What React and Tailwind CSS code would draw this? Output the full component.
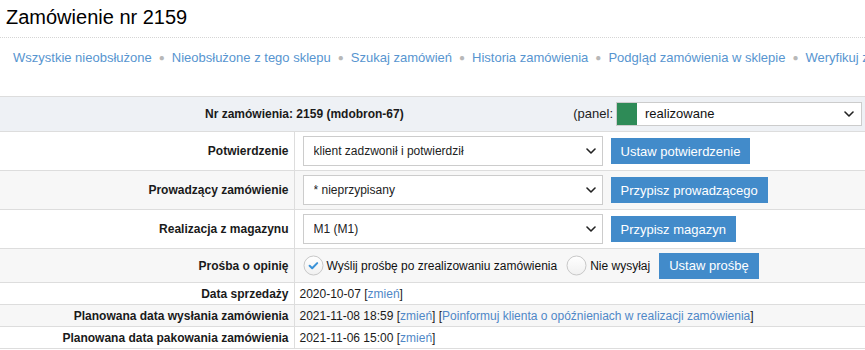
import React from 'react';

const navLinks = [
  'Wszystkie nieobsłużone',
  'Nieobsłużone z tego sklepu',
  'Szukaj zamówień',
  'Historia zamówienia',
  'Podgląd zamówienia w sklepie',
  'Weryfikuj zamówienie',
];

// strzałka selecta
const Chevron = () => (
  <svg width="10" height="6" viewBox="0 0 10 6" className="pointer-events-none absolute right-[7px] top-1/2 -translate-y-1/2">
    <path d="M1 1l4 4 4-4" fill="none" stroke="#222" strokeWidth="1.6" strokeLinecap="round" strokeLinejoin="round" />
  </svg>
);

const Select = ({ value }) => (
  <div className="relative ml-[3px] w-[300px] h-[30px]">
    <select
      defaultValue={value}
      className="appearance-none w-full h-full border border-[#ccc] bg-white pl-[10px] pr-6 text-[12px] text-[#222] outline-none"
    >
      <option>{value}</option>
    </select>
    <Chevron />
  </div>
);

const Button = ({ children }) => (
  <button className="h-[26px] px-[10px] bg-[#428bca] text-white text-[13px] leading-none whitespace-nowrap">
    {children}
  </button>
);

const Radio = ({ checked }) => (
  <svg width="21" height="21" viewBox="0 0 21 21" className="shrink-0">
    <defs>
      <linearGradient id="rg" x1="0" y1="0" x2="0" y2="1">
        <stop offset="0" stopColor="#ffffff" />
        <stop offset="1" stopColor="#f0f0f0" />
      </linearGradient>
    </defs>
    <circle cx="10.5" cy="10.5" r="9.5" fill="url(#rg)" stroke="#c8c8c8" />
    {checked && (
      <path d="M6.6 10.8l2.6 2.5 5-5.2" fill="none" stroke="#3a92d8" strokeWidth="2" strokeLinecap="round" strokeLinejoin="round" />
    )}
  </svg>
);

const Link = ({ children }) => (
  <span>
    [<a className="text-[#4f87c7]">{children}</a>]
  </span>
);

const labelCls = 'w-[294px] text-right font-bold pr-[5px] border-r border-[#ddd] text-[#1a1a1a]';
const valueCls = 'pl-[5px] text-[#1a1a1a]';

export default function App() {
  return (
    <div className="w-[865px] h-[350px] overflow-hidden bg-white font-['Liberation_Sans',Arial,sans-serif]">
      {/* Tytuł */}
      <div className="pt-[5px] pb-[8px] pl-[6px] border-b border-dotted border-[#d5d5d5]">
        <h1 className="text-[20px] leading-6 text-black">Zamówienie nr 2159</h1>
      </div>

      {/* Nawigacja */}
      <div className="mt-[12px] pl-[13px] flex items-center whitespace-nowrap overflow-hidden text-[13px] leading-4 text-[#5795d0]">
        {navLinks.map((l, i) => (
          <React.Fragment key={l}>
            {i > 0 && <span className="mx-[7px] text-[#b8b8b8] text-[10px]">●</span>}
            <a className="shrink-0">{l}</a>
          </React.Fragment>
        ))}
      </div>

      {/* Tabela zamówienia */}
      <table className="mt-[30px] w-full border-collapse text-[12px]">
        <tbody>
          <tr className="h-[35px] bg-[#eef1f5] border-t border-b border-[#ddd]">
            <td colSpan={2}>
              <div className="flex items-center">
                <span className="ml-[205px] font-bold text-[#1a1a1a]">Nr zamówienia: 2159 (mdobron-67)</span>
                <span className="ml-auto mr-[3px] text-[13px] text-[#222]">(panel:</span>
                <div className="relative w-[246px] h-[24px] mr-[3px] flex border border-[#ccc] bg-white">
                  <div className="w-[20px] h-full bg-[#2e8b57]" />
                  <span className="pl-[8px] self-center text-[13px] text-[#111]">realizowane</span>
                  <Chevron />
                </div>
              </div>
            </td>
          </tr>

          <tr className="h-[39px] bg-white border-b border-[#ddd]">
            <td className={labelCls}>Potwierdzenie</td>
            <td className={valueCls}>
              <div className="flex items-center gap-[8px]">
                <Select value="klient zadzwonił i potwierdził" />
                <Button>Ustaw potwierdzenie</Button>
              </div>
            </td>
          </tr>

          <tr className="h-[39px] bg-[#f7f7f7] border-b border-[#ddd]">
            <td className={labelCls}>Prowadzący zamówienie</td>
            <td className={valueCls}>
              <div className="flex items-center gap-[8px]">
                <Select value="* nieprzypisany" />
                <Button>Przypisz prowadzącego</Button>
              </div>
            </td>
          </tr>

          <tr className="h-[39px] bg-white border-b border-[#ddd]">
            <td className={labelCls}>Realizacja z magazynu</td>
            <td className={valueCls}>
              <div className="flex items-center gap-[8px]">
                <Select value="M1 (M1)" />
                <Button>Przypisz magazyn</Button>
              </div>
            </td>
          </tr>

          <tr className="h-[34px] bg-[#f7f7f7] border-b border-[#ddd]">
            <td className={labelCls}>Prośba o opinię</td>
            <td className={valueCls}>
              <div className="flex items-center ml-[3px] text-[#111]">
                <Radio checked />
                <span className="ml-[3px]">Wyślij prośbę po zrealizowaniu zamówienia</span>
                <span className="ml-[9px]"><Radio /></span>
                <span className="ml-[3px]">Nie wysyłaj</span>
                <span className="ml-[9px]"><Button>Ustaw prośbę</Button></span>
              </div>
            </td>
          </tr>

          <tr className="h-[22px] bg-white border-b border-[#ddd]">
            <td className={labelCls}>Data sprzedaży</td>
            <td className={valueCls}>
              2020-10-07 <Link>zmień</Link>
            </td>
          </tr>

          <tr className="h-[22px] bg-[#f7f7f7] border-b border-[#ddd]">
            <td className={labelCls}>Planowana data wysłania zamówienia</td>
            <td className={valueCls}>
              2021-11-08 18:59 <Link>zmień</Link> <Link>Poinformuj klienta o opóźnieniach w realizacji zamówienia</Link>
            </td>
          </tr>

          <tr className="h-[22px] bg-white border-b border-[#ddd]">
            <td className={labelCls}>Planowana data pakowania zamówienia</td>
            <td className={valueCls}>
              2021-11-06 15:00 <Link>zmień</Link>
            </td>
          </tr>
        </tbody>
      </table>
    </div>
  );
}
